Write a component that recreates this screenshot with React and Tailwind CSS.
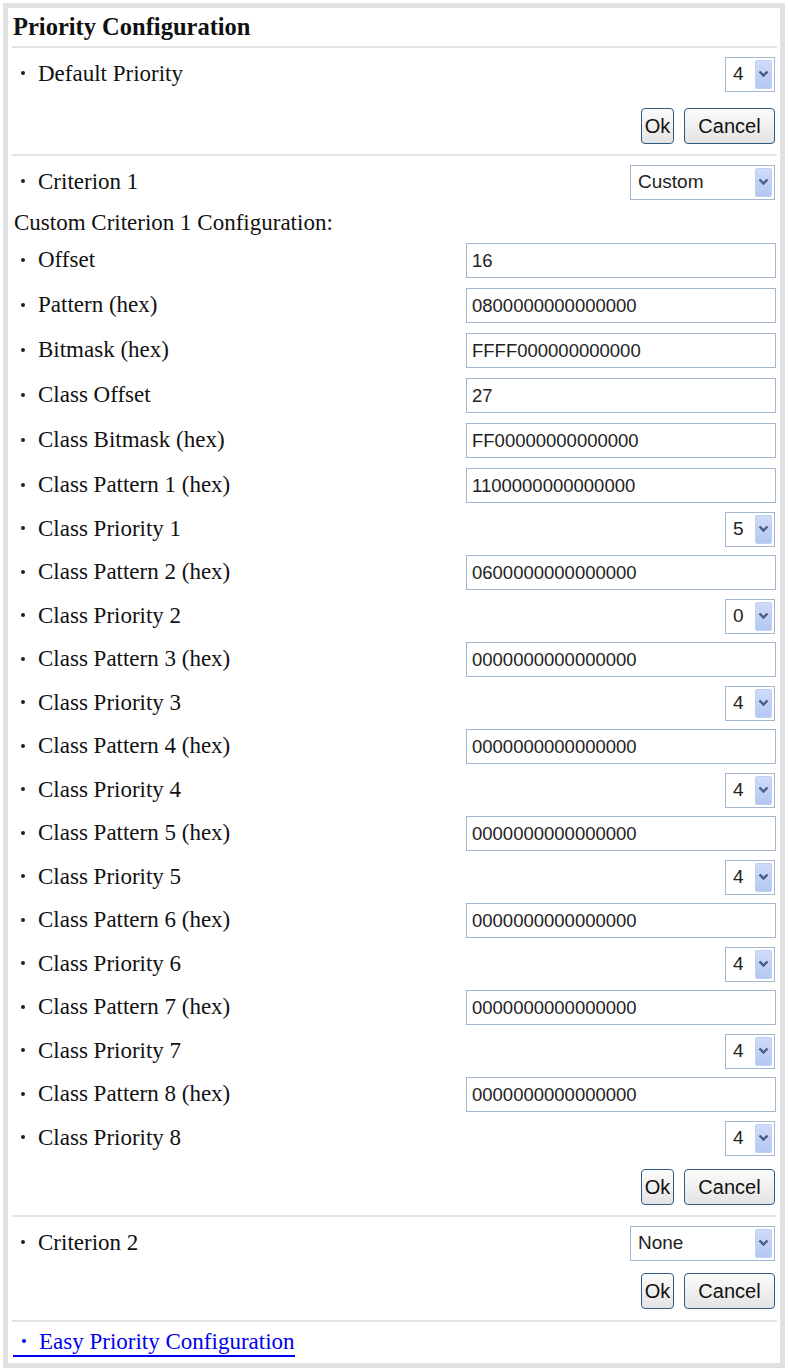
import React from 'react';

const serif = "font-['Liberation_Serif',serif]";
const sans = "font-['Liberation_Sans',Arial,sans-serif]";

const Dot = ({ color = 'bg-[#222]' }) => (
  <span className={`inline-block w-[4px] h-[4px] rounded-full ${color} ml-[9px] mr-[13px] -mt-[2px] shrink-0`} />
);

const Label = ({ children }) => (
  <div className={`flex items-center text-[23px] text-[#111] ${serif}`}>
    <Dot />
    <span>{children}</span>
  </div>
);

const Chevron = () => (
  <svg width="11" height="8" viewBox="0 0 11 8">
    <path d="M1.5 1.5 L5.5 5.5 L9.5 1.5" fill="none" stroke="#4a5c80" strokeWidth="2.4" />
  </svg>
);

// select box with the old xp style arrow button
const Select = ({ value, width = 'w-[50px]' }) => (
  <div className={`${width} h-[35px] flex items-stretch border border-[#a3b7d1] bg-white p-[2px]`}>
    <span className={`flex-1 flex items-center pl-[5px] text-[19px] text-[#222] ${sans}`}>{value}</span>
    <span className="w-[17px] flex items-center justify-center bg-gradient-to-b from-[#cfdcfa] to-[#b2c7f2] border border-[#bfd0f2] rounded-[2px]">
      <Chevron />
    </span>
  </div>
);

const TextInput = ({ value }) => (
  <div className={`w-[310px] h-[35px] flex items-center border border-[#a3b7d1] bg-white pl-[5px] text-[18.5px] text-[#222] ${sans}`}>
    {value}
  </div>
);

const Btn = ({ children, width }) => (
  <div
    className={`${width} h-[36px] flex items-center justify-center rounded-[4px] border border-[#2f5a86] bg-gradient-to-b from-[#fbfbfb] to-[#e4e4e4] text-[20px] text-[#111] ${sans}`}
  >
    {children}
  </div>
);

const Buttons = ({ className }) => (
  <div className={`flex justify-end gap-[10px] pr-[2px] ${className}`}>
    <Btn width="w-[33px]">Ok</Btn>
    <Btn width="w-[91px]">Cancel</Btn>
  </div>
);

const Sep = () => <div className="h-[2px] bg-[#e3e3e3]" />;

const InputRow = ({ label, value }) => (
  <div className="h-[45px] flex items-center justify-between pr-[1px]">
    <Label>{label}</Label>
    <TextInput value={value} />
  </div>
);

const SelectRow = ({ label, value }) => (
  <div className="h-[42px] flex items-center justify-between pr-[2px]">
    <Label>{label}</Label>
    <Select value={value} />
  </div>
);

const classRows = [
  ['1100000000000000', '5'],
  ['0600000000000000', '0'],
  ['0000000000000000', '4'],
  ['0000000000000000', '4'],
  ['0000000000000000', '4'],
  ['0000000000000000', '4'],
  ['0000000000000000', '4'],
  ['0000000000000000', '4'],
];

export default function App() {
  return (
    <div className="w-[788px] h-[1372px] bg-white p-[3px]">
      <div className="h-[1365px] w-[782px] border-[5px] border-[#e1e1e1] px-[4px] pr-[3px]">
        {/* title */}
        <div className={`h-[38px] flex items-center pl-[1px] text-[24.5px] font-bold text-[#111] ${serif}`}>
          Priority Configuration
        </div>
        <Sep />

        {/* default priority */}
        <div className="h-[52px] flex items-center justify-between pr-[2px]">
          <Label>Default Priority</Label>
          <Select value="4" />
        </div>
        <Buttons className="pt-[8px] pb-[10px]" />
        <Sep />

        {/* criterion 1 */}
        <div className="h-[52px] flex items-center justify-between pr-[2px]">
          <Label>Criterion 1</Label>
          <Select value="Custom" width="w-[145px]" />
        </div>
        <div className={`h-[30px] flex items-center pl-[2px] text-[23px] text-[#111] ${serif}`}>
          Custom Criterion 1 Configuration:
        </div>
        <InputRow label="Offset" value="16" />
        <InputRow label="Pattern (hex)" value="0800000000000000" />
        <InputRow label="Bitmask (hex)" value="FFFF000000000000" />
        <InputRow label="Class Offset" value="27" />
        <InputRow label="Class Bitmask (hex)" value="FF00000000000000" />
        {classRows.map(([pattern, prio], i) => (
          <React.Fragment key={i}>
            <InputRow label={`Class Pattern ${i + 1} (hex)`} value={pattern} />
            <SelectRow label={`Class Priority ${i + 1}`} value={prio} />
          </React.Fragment>
        ))}
        <Buttons className="pt-[10px] pb-[10px]" />
        <Sep />

        {/* criterion 2 */}
        <div className="h-[52px] flex items-center justify-between pr-[2px]">
          <Label>Criterion 2</Label>
          <Select value="None" width="w-[145px]" />
        </div>
        <Buttons className="pt-[4px] pb-[11px]" />
        <Sep />

        {/* link, underline runs under the bullet too */}
        <div className="h-[42px] flex items-center pl-[1px]">
          <a href="#" className={`flex items-center leading-[26px] border-b-2 border-[#0000ee] text-[23px] text-[#0000ee] ${serif}`}>
            <span className="inline-block w-[4px] h-[4px] rounded-full bg-[#0000ee] ml-[9px] mr-[13px] -mt-[2px]" />
            Easy Priority Configuration
          </a>
        </div>
      </div>
    </div>
  );
}
